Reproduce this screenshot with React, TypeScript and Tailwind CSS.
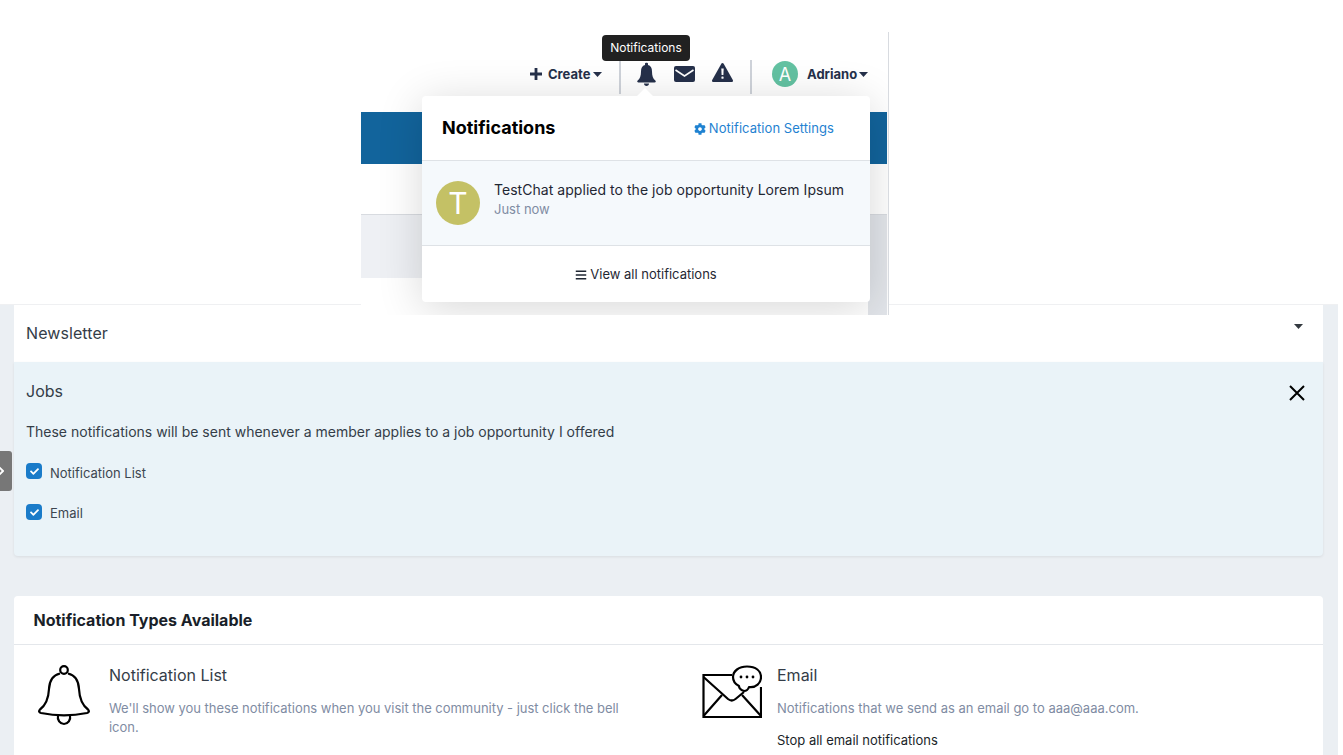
import { FaCog, FaBars, FaCheck, FaChevronRight } from "react-icons/fa";

function Caret({ className }: { className?: string }) {
  return (
    <svg width="9" height="5" viewBox="0 0 9 5" fill="currentColor" className={className}>
      <path d="M0 0H9L4.5 5Z" />
    </svg>
  );
}

function Check({ label, labelClass }: { label: string; labelClass: string }) {
  return (
    <div className="flex items-center gap-2 h-4">
      <span className="w-4 h-4 rounded-[4px] bg-[#1a7bc9] flex items-center justify-center text-white">
        <FaCheck className="w-[9px] h-[9px]" />
      </span>
      <span className={labelClass}>{label}</span>
    </div>
  );
}

function PlusIcon() {
  return (
    <svg width="12" height="12" viewBox="0 0 12 12" fill="currentColor" className="shrink-0 -mt-[1px]">
      <path d="M4.6 0H7.4V4.6H12V7.4H7.4V12H4.6V7.4H0V4.6H4.6Z" />
    </svg>
  );
}

function NavBell() {
  return (
    <svg width="19" height="24" viewBox="0 0 19 24" fill="currentColor">
      <path d="M8 1.5C8 .5 11 .5 11 1.5V3C13.8 3.7 15 6 15 9.5C15 14 16 16.5 18.3 18.6C19.2 19.5 18.8 20.5 17.6 20.5H1.4C.2 20.5 -.2 19.5 .7 18.6C3 16.5 4 14 4 9.5C4 6 5.2 3.7 8 3Z" />
      <path d="M7 21.5H12C12 23 11 24 9.5 24C8 24 7 23 7 21.5Z" />
    </svg>
  );
}

function NavMail() {
  return (
    <svg width="21" height="16" viewBox="0 0 21 16">
      <rect width="21" height="16" rx="2" fill="currentColor" />
      <path d="M1.5 4L10.5 10L19.5 4" fill="none" stroke="#fff" strokeWidth="1.6" />
    </svg>
  );
}

function NavWarn() {
  return (
    <svg width="21" height="19" viewBox="0 0 21 19">
      <path d="M9.3 .8C9.9 -.2 11.1 -.2 11.7 .8L20.8 17C21.3 18 20.7 19 19.6 19H1.4C.3 19 -.3 18 .2 17Z" fill="currentColor" />
      <path d="M9.3 5.5H11.7L11.4 12H9.6Z" fill="#fff" />
      <rect x="9.4" y="13.5" width="2.2" height="2.2" rx=".4" fill="#fff" />
    </svg>
  );
}

function BellOutline() {
  return (
    <svg width="52" height="62" viewBox="0 0 52 62" fill="none" stroke="#000" strokeWidth="2.2" className="-mt-[2px]">
      <circle cx="26" cy="6" r="3.8" />
      <path d="M22 9.5C15 11 11.5 16 11 25C10.5 35 8 41 2 45.5C0.5 47 1 48.5 3 49C17 52 35 52 49 49C51 48.5 51.5 47 50 45.5C44 41 41.5 35 41 25C40.5 16 37 11 30 9.5" strokeLinejoin="round" />
      <path d="M20 51.5C19 56 22 60 26 60C30 60 33 56 32 51.5" />
    </svg>
  );
}

function MailChat() {
  return (
    <svg width="60" height="54" viewBox="0 0 60 54" fill="none" stroke="#000" strokeWidth="2.2" className="-mt-[1px]">
      <path d="M30 10H1.5V52H59V22" />
      <path d="M1.5 12L26 34C28.5 36 31 36 33.5 34L42 27" />
      <path d="M1.5 51L20 30M59 51L40 30" />
      <path d="M42 26C44 26 46 25 47 22C54 23 59 18 59 12C59 6 54 1.5 45 1.5C37 1.5 31 6 31 12C31 16 33 19 37 21C37 23 39 25 42 26Z" fill="#fff" strokeLinejoin="round" />
      <circle cx="39" cy="12" r="1.4" fill="#000" stroke="none" />
      <circle cx="45" cy="12" r="1.4" fill="#000" stroke="none" />
      <circle cx="51" cy="12" r="1.4" fill="#000" stroke="none" />
    </svg>
  );
}

export default function App() {
  return (
    <div className="w-[1343px] h-[755px] overflow-hidden bg-white font-['Inter',sans-serif] flex flex-col relative">
      <div className="h-[304px] shrink-0 bg-white relative z-10">
        <div className="ml-[361px] pt-8 w-[528px] h-[315px]">
          <div className="relative w-[528px] h-[283px] border-r border-[#d8dbe0] bg-white overflow-hidden">
            <div className="h-[80px] flex items-center pl-[169px] bg-white text-[#25304a]">
              <div className="flex items-center text-[13px] font-bold w-[72px] mt-[5px]">
                <PlusIcon />
                <span className="ml-[6px]">Create</span>
                <Caret className="shrink-0 ml-[3px]" />
              </div>
              <div className="w-[2px] h-[34px] bg-[#cfd3da] ml-[17px] mt-[9px]" />
              <div className="ml-[16px] mt-[3px] flex items-center">
                <NavBell />
              </div>
              <div className="ml-[18px] mt-[3px] flex items-center">
                <NavMail />
              </div>
              <div className="ml-[17px] mt-[1px] flex items-center">
                <NavWarn />
              </div>
              <div className="w-[2px] h-[34px] bg-[#cfd3da] ml-[17px] mt-[9px]" />
              <div className="ml-[20px] mt-[4px] w-[26px] h-[26px] rounded-full bg-[#63c2a2] text-white text-[18px] flex items-center justify-center">A</div>
              <div className="ml-[9px] mt-[5px] flex items-center text-[13px] font-bold">
                <span>Adriano</span>
                <Caret className="ml-[2px]" />
              </div>
            </div>
            <div className="h-[52px] w-[526px] bg-[#12649c]" />
            <div className="h-[51px] w-[526px] bg-white border-b border-[#d8dbe0]" />
            <div className="h-[63px] w-[526px] bg-[#eef0f4] flex justify-end">
              <div className="w-[19px] bg-[#e2e5ea]" />
            </div>
            <div className="h-[37px] w-[526px] flex justify-end bg-white">
              <div className="w-[19px] bg-[#e2e5ea]" />
            </div>

            <div className="absolute left-[241px] top-[3px] h-[26px] w-[88px] bg-[#212121] rounded-[4px] text-white text-[12px] flex items-center justify-center z-20">
              Notifications
            </div>
            <div className="absolute left-[61px] top-[64px] w-[448px] h-[206px] bg-white rounded-[4px] shadow-[0_6px_45px_rgba(0,0,0,0.16)] flex flex-col">
              <div className="absolute left-[216px] -top-[5px] w-[14px] h-[14px] bg-white rotate-45" />
              <div className="h-[65px] flex items-center justify-between pl-[20px] pr-[36px] border-b border-[#dee2e6] relative">
                <span className="text-[18px] font-bold text-black -mt-[2px]">Notifications</span>
                <span className="flex items-center gap-[3px] text-[13px] tracking-[0.05px] text-[#1f82d1] mt-[1px]">
                  <FaCog className="w-[12px] h-[12px]" />
                  Notification Settings
                </span>
              </div>
              <div className="h-[85px] bg-[#f5f9fc] border-b border-[#dee2e6] flex items-center pl-[14px]">
                <div className="w-[44px] h-[44px] rounded-full bg-[#c4c165] text-white text-[30px] font-normal flex items-center justify-center">T</div>
                <div className="ml-[14px] mb-[9px]">
                  <div className="text-[14px] leading-[20px] tracking-[0.04px] text-[#1f2733]">TestChat applied to the job opportunity Lorem Ipsum</div>
                  <div className="text-[13px] leading-[18px] text-[#7f8ca3]">Just now</div>
                </div>
              </div>
              <div className="flex-1 flex items-center justify-center gap-[3px] text-[13px] text-[#1f2733] pt-[1px]">
                <FaBars className="w-[12px] h-[12px]" />
                View all notifications
              </div>
            </div>
          </div>
        </div>
      </div>

      <div className="relative w-[1338px] flex-1 bg-[#ebeff3] px-[14px] border-t border-[#eff0f2]">
        <div className="absolute left-0 top-[146px] w-[12px] h-[40px] bg-[#777777] rounded-r-[3px] overflow-hidden flex items-center">
          <FaChevronRight className="w-[12px] h-[12px] text-white -ml-[5px]" />
        </div>
        <div className="w-[1309px] bg-white h-[57px] pl-[12px] pr-[20px] flex items-center justify-between">
          <span className="text-[16px] tracking-[0.08px] text-[#343d48] -mt-[2px]">Newsletter</span>
          <Caret className="text-[#343a40] mb-[14px]" />
        </div>
        <div className="w-[1309px] h-[194px] bg-[#eaf3f8] rounded-b-[4px] shadow-[0_1px_3px_rgba(0,0,0,0.08)] pl-[12px] pr-[18px] pt-[19px]">
          <div className="flex items-center justify-between h-[20px]">
            <span className="text-[16px] text-[#343d48]">Jobs</span>
            <svg width="16" height="16" viewBox="0 0 16 16" stroke="#000" strokeWidth="2" className="mt-[3px]">
              <path d="M1 1L15 15M15 1L1 15" />
            </svg>
          </div>
          <div className="mt-[21px] text-[14px] leading-[20px] text-[#343d48]">These notifications will be sent whenever a member applies to a job opportunity I offered</div>
          <div className="mt-[21px] flex flex-col gap-[25px]">
            <Check label="Notification List" labelClass="text-[13px] text-[#3c4650] mt-[5px]" />
            <Check label="Email" labelClass="text-[13px] text-[#3c4650] mt-[3px]" />
          </div>
        </div>

        <div className="w-[1309px] mt-[40px] bg-white rounded-t-[4px] h-[200px]">
          <div className="h-[49px] pl-[19.5px] pb-[1px] flex items-center border-b border-[#e4e7eb] text-[16px] font-bold text-[#1a1f29]">Notification Types Available</div>
          <div className="flex">
            <div className="w-[668px] pl-[24px] pt-[21px] flex">
              <BellOutline />
              <div className="ml-[19px] w-[520px] -mt-[1px]">
                <div className="text-[16px] leading-[20px] text-[#343d48]">Notification List</div>
                <div className="mt-[14px] text-[13px] leading-[19px] tracking-[-0.025px] text-[#7f8ca3]">We'll show you these notifications when you visit the community - just click the bell icon.</div>
              </div>
            </div>
            <div className="pt-[21px] flex pl-[20px]">
              <MailChat />
              <div className="ml-[15px] -mt-[1px]">
                <div className="text-[16px] leading-[20px] text-[#343d48]">Email</div>
                <div className="mt-[14px] text-[13px] leading-[19px] text-[#7f8ca3]">Notifications that we send as an email go to aaa@aaa.com.</div>
                <div className="mt-[13px] text-[13px] leading-[19px] text-[#1a1f29]">Stop all email notifications</div>
              </div>
            </div>
          </div>
        </div>
      </div>
    </div>
  );
}
